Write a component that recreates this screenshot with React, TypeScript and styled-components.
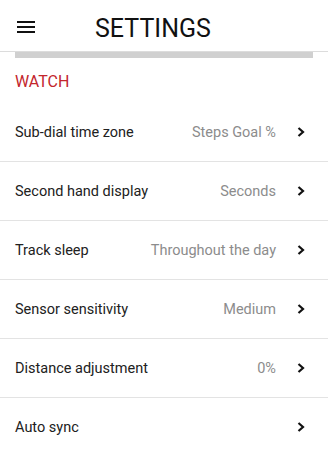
import React from "react";
import styled, { createGlobalStyle } from "styled-components";

const Global = createGlobalStyle`
  html, body { margin: 0; padding: 0; background: #fff; }
  body { font-family: Roboto, "Noto Sans", Arial, sans-serif; -webkit-font-smoothing: antialiased; }
  * { box-sizing: border-box; }
`;

const Page = styled.div`
  width: 328px;
  height: 450px;
  overflow: hidden;
  background: #fff;
  display: flex;
  flex-direction: column;
  & > * { flex-shrink: 0; }
`;

const Header = styled.header`
  height: 52px;
  display: flex;
  align-items: center;
  border-bottom: 1px solid #dcdcdc;
  padding-left: 17px;
  padding-top: 6px;
`;

const MenuButton = styled.div`
  width: 18px;
  height: 12px;
  display: flex;
  margin-top: -4px;
`;

const Title = styled.h1`
  margin: 0 0 0 60px;
  font-size: 25px;
  font-weight: 400;
  color: #111;
  letter-spacing: 0;
`;

const ScrollBand = styled.div`
  height: 6px;
  margin: 0 15px;
  background: #d0d0d0;
`;

const SectionTitle = styled.div`
  height: 45px;
  display: flex;
  align-items: center;
  padding: 2px 15px 0;
  font-size: 16px;
  color: #c3262c;
`;

const List = styled.div`
  display: flex;
  flex-direction: column;
`;

const Row = styled.div`
  height: 59px;
  flex-shrink: 0;
  display: flex;
  align-items: center;
  padding: 0 23px 0 15px;
  border-bottom: 1px solid #e3e3e3;
`;

const Label = styled.span`
  flex: 1;
  font-size: 14.5px;
  color: #212121;
`;

const Value = styled.span`
  font-size: 14.5px;
  color: #8c8c8c;
  margin-right: 21px;
`;

const Chevron = styled.svg`
  width: 8px;
  height: 10px;
  flex-shrink: 0;
`;

const rows: { label: string; value?: string }[] = [
  { label: "Sub-dial time zone", value: "Steps Goal %" },
  { label: "Second hand display", value: "Seconds" },
  { label: "Track sleep", value: "Throughout the day" },
  { label: "Sensor sensitivity", value: "Medium" },
  { label: "Distance adjustment", value: "0%" },
  { label: "Auto sync" },
];

export default function App() {
  return (
    <>
      <Global />
      <Page>
        <Header>
          <MenuButton>
            <svg width="18" height="12" viewBox="0 0 18 12">
              <rect x="0" y="0" width="18" height="2" fill="#111" />
              <rect x="0" y="5" width="18" height="2" fill="#111" />
              <rect x="0" y="10" width="18" height="2" fill="#111" />
            </svg>
          </MenuButton>
          <Title>SETTINGS</Title>
        </Header>
        <ScrollBand />
        <SectionTitle>WATCH</SectionTitle>
        <List>
          {rows.map((r) => (
            <Row key={r.label}>
              <Label>{r.label}</Label>
              {r.value && <Value>{r.value}</Value>}
              <Chevron viewBox="0 0 8 10">
                <polyline
                  points="1.5,1 6,5 1.5,9"
                  fill="none"
                  stroke="#111"
                  strokeWidth="2.2"
                />
              </Chevron>
            </Row>
          ))}
        </List>
      </Page>
    </>
  );
}
